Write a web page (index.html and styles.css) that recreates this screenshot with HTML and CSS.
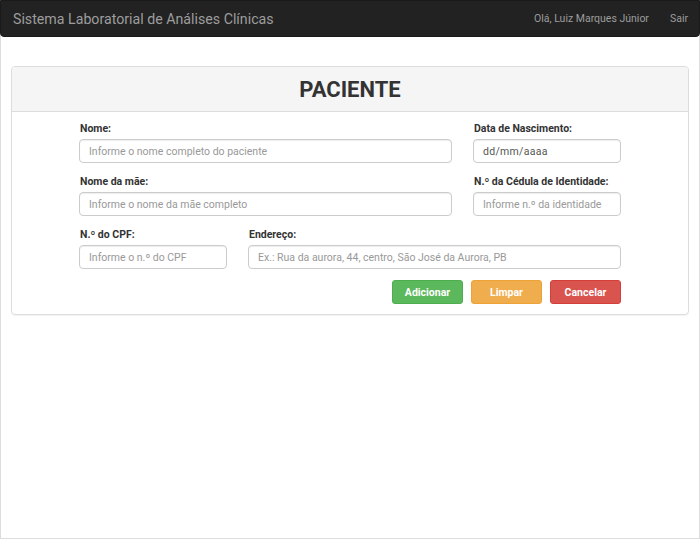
FILE: index.html
```html
<!DOCTYPE html>
<html lang="pt-BR">
<head>
<meta charset="utf-8">
<title>Paciente</title>
<link rel="stylesheet" href="styles.css">
</head>
<body>
<div class="page">
  <nav class="navbar">
    <div class="brand">Sistema Laboratorial de Análises Clínicas</div>
    <div class="nav-right">
      <span class="user">Olá, Luiz Marques Júnior</span>
      <span class="logout">Sair</span>
    </div>
  </nav>
  <div class="panel">
    <div class="panel-heading"><h1>PACIENTE</h1></div>
    <form class="panel-body">
      <div class="row">
        <div class="field w-wide">
          <label>Nome:</label>
          <input type="text" placeholder="Informe o nome completo do paciente">
        </div>
        <div class="field w-small">
          <label>Data de Nascimento:</label>
          <div class="fake-input date">dd/mm/aaaa</div>
        </div>
      </div>
      <div class="row">
        <div class="field w-wide">
          <label>Nome da mãe:</label>
          <input type="text" placeholder="Informe o nome da mãe completo">
        </div>
        <div class="field w-small">
          <label>N.º da Cédula de Identidade:</label>
          <input type="text" placeholder="Informe n.º da identidade">
        </div>
      </div>
      <div class="row">
        <div class="field w-small">
          <label>N.º do CPF:</label>
          <input type="text" placeholder="Informe o n.º do CPF">
        </div>
        <div class="field w-wide">
          <label>Endereço:</label>
          <input type="text" placeholder="Ex.: Rua da aurora, 44, centro, São José da Aurora, PB">
        </div>
      </div>
      <div class="actions">
        <button type="button" class="btn btn-success">Adicionar</button>
        <button type="button" class="btn btn-warning">Limpar</button>
        <button type="button" class="btn btn-danger">Cancelar</button>
      </div>
    </form>
  </div>
</div>
</body>
</html>
```

FILE: styles.css
```css
* { box-sizing: border-box; }
html, body { margin: 0; padding: 0; }
body {
  font-family: Roboto, "Liberation Sans", sans-serif;
  color: #333;
  background: #fff;
}
.page {
  width: 700px;
  height: 539px;
  border: 1px solid #ddd;
  border-top: none;
  position: relative;
}
.navbar {
  margin: 0 -1px;
  height: 37px;
  background: #222;
  border: 1px solid #1a1a1a;
  border-radius: 0 0 4px 4px;
  display: flex;
  align-items: center;
  justify-content: space-between;
  padding: 0 11px 0 12px;
}
.brand {
  color: #9d9d9d;
  font-size: 14.2px;
}
.nav-right {
  display: flex;
  gap: 21px;
  font-size: 10.5px;
  color: #9d9d9d;
}
.panel {
  margin: 29px 10px 0 10px;
  border: 1px solid #ddd;
  border-radius: 4px;
  box-shadow: 0 1px 1px rgba(0,0,0,0.05);
}
.panel-heading {
  background: #f5f5f5;
  border-bottom: 1px solid #ddd;
  border-radius: 3px 3px 0 0;
  height: 45px;
  display: flex;
  align-items: center;
  justify-content: center;
}
.panel-heading h1 {
  margin: 0;
  font-size: 22px;
  font-weight: 700;
  color: #333;
}
.panel-body {
  padding: 10px 67px 10px 67px;
  display: flex;
  flex-direction: column;
}
.row {
  display: flex;
  justify-content: space-between;
  margin-bottom: 12px;
}
.field { display: flex; flex-direction: column; }
.w-wide { width: 373px; }
.w-small { width: 148px; }
label {
  font-size: 10.5px;
  font-weight: 700;
  color: #333;
  height: 17px;
  line-height: 14px;
  padding-left: 1px;
}
input, .fake-input {
  height: 24px;
  border: 1px solid #ccc;
  border-radius: 4px;
  font-family: Roboto, "Liberation Sans", sans-serif;
  font-size: 10.5px;
  padding: 0 9px;
  color: #555;
  box-shadow: inset 0 1px 1px rgba(0,0,0,0.075);
  outline: none;
}
.fake-input { display: flex; align-items: center; color: #555; letter-spacing: 0.3px; }
input::placeholder { color: #999; }
.actions {
  display: flex;
  justify-content: flex-end;
  gap: 8px;
  margin-top: -1px;
}
.btn {
  width: 71px;
  height: 24px;
  border: 1px solid transparent;
  border-radius: 3px;
  color: #fff;
  font-family: Roboto, "Liberation Sans", sans-serif;
  font-size: 10.5px;
  font-weight: 700;
  padding: 0;
}
.btn-success { background: #5cb85c; border-color: #4cae4c; }
.btn-warning { background: #f0ad4e; border-color: #eea236; }
.btn-danger { background: #d9534f; border-color: #d43f3a; }
```
